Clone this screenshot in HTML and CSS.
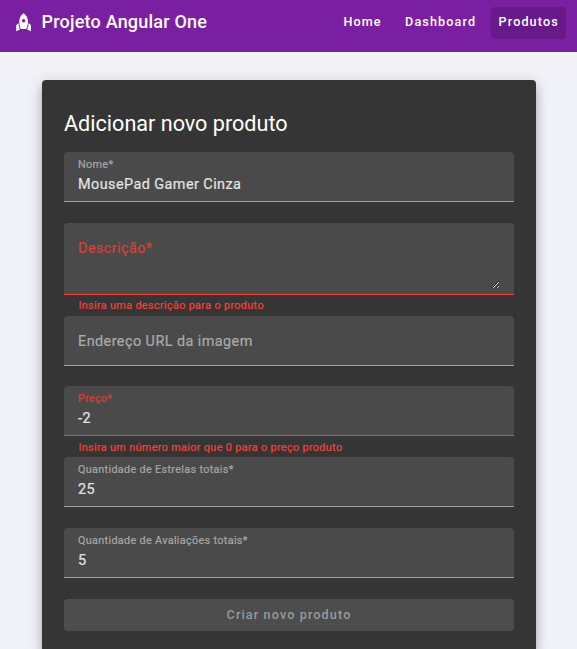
FILE: index.html
```html
<!DOCTYPE html>
<html lang="pt-BR">
<head>
<meta charset="utf-8">
<title>Projeto Angular One</title>
<link rel="stylesheet" href="styles.css">
</head>
<body>
<header class="toolbar">
  <svg class="logo" viewBox="0 0 16 19" width="16" height="19" aria-hidden="true">
    <path fill="#fff" fill-rule="evenodd" d="M7.6 0.2C10.2 2 12 5.1 12 8.7C12 11.4 11.3 13.9 10.3 15.9H4.9C3.9 13.9 3.2 11.4 3.2 8.7C3.2 5.1 5 2 7.6 0.2ZM7.6 6A1.7 1.7 0 1 0 7.6 9.4A1.7 1.7 0 1 0 7.6 6Z"/>
    <path fill="#fff" d="M2.6 10.2C2.7 12.9 3.2 14.8 4.1 16.6L0.2 18.2V13C0.2 11.8 1.3 11 2.6 10.2ZM12.6 10.2C12.5 12.9 12 14.8 11.1 16.6L15 18.2V13C15 11.8 13.9 11 12.6 10.2Z"/>
  </svg>
  <span class="brand">Projeto Angular One</span>
  <nav class="nav">
    <a class="nav-link">Home</a>
    <a class="nav-link">Dashboard</a>
    <a class="nav-link active">Produtos</a>
  </nav>
</header>
<main class="card">
  <h1 class="title">Adicionar novo produto</h1>
  <form class="form">
    <div class="field">
      <div class="box"><span class="label">Nome*</span><span class="value">MousePad Gamer Cinza</span></div>
    </div>
    <div class="field invalid">
      <div class="box area">
        <span class="placeholder">Descrição*</span>
        <svg class="grip" width="8" height="8" viewBox="0 0 8 8" shape-rendering="crispEdges" aria-hidden="true">
          <path stroke="#222" d="M0 6.5h1M1 5.5h1M2 4.5h1M3 3.5h1M4 2.5h1M5 1.5h1M6 .5h1M4 6.5h1M5 5.5h1M6 4.5h1"/>
          <path stroke="#d8d8d8" d="M1 6.5h1M2 5.5h1M3 4.5h1M4 3.5h1M5 2.5h1M6 1.5h1M5 6.5h1M6 5.5h1"/>
        </svg>
      </div>
      <div class="error">Insira uma descrição para o produto</div>
    </div>
    <div class="field">
      <div class="box"><span class="placeholder">Endereço URL da imagem</span></div>
    </div>
    <div class="field invalid">
      <div class="box"><span class="label">Preço*</span><span class="value">-2</span></div>
      <div class="error low">Insira um número maior que 0 para o preço produto</div>
    </div>
    <div class="field">
      <div class="box"><span class="label">Quantidade de Estrelas totais*</span><span class="value">25</span></div>
    </div>
    <div class="field">
      <div class="box"><span class="label">Quantidade de Avaliações totais*</span><span class="value">5</span></div>
    </div>
    <button class="submit" type="button" disabled>Criar novo produto</button>
  </form>
</main>
</body>
</html>
```
FILE: styles.css
```css
* { box-sizing: border-box; }

body {
  margin: 0;
  height: 649px;
  background: #f1f2f8;
  font-family: Roboto, sans-serif;
}

.toolbar {
  display: flex;
  align-items: flex-start;
  height: 52px;
  padding: 7px 11px 0 16px;
  background: #7b1fa2;
  color: #fff;
}

.logo { margin-top: 6px; }

.brand {
  margin-left: 9.5px;
  font-size: 18px;
  font-weight: 500;
  line-height: 29px;
  letter-spacing: .21px;
}

.nav {
  display: flex;
  gap: 9px;
  margin-left: auto;
}

.nav-link {
  height: 32px;
  padding: 0 7.2px;
  border-radius: 4px;
  font-size: 12.6px;
  font-weight: 500;
  line-height: 30px;
  letter-spacing: 1.125px;
}

.nav-link.active {
  margin-left: -1px;
  background: #691a8a;
}

.card {
  width: 494px;
  height: 569px;
  margin: 28px 0 0 42px;
  padding: 29px 22px 0;
  border-radius: 4px 4px 0 0;
  background: #353535;
  box-shadow: 0 5px 5px -3px rgba(0, 0, 0, .2), 0 8px 10px 1px rgba(0, 0, 0, .14), 0 3px 14px 2px rgba(0, 0, 0, .12);
}

.title {
  margin: 0 0 13px;
  color: #fff;
  font-size: 21.6px;
  font-weight: 400;
  line-height: 30px;
}

.field { height: 71px; }
.field:nth-child(3) { height: 70px; }

.box {
  display: flex;
  flex-direction: column;
  height: 50px;
  padding: 6px 14px 0;
  border-bottom: 1px solid #a0a0a0;
  border-radius: 4px 4px 0 0;
  background: #4a4a4a;
}

.area {
  position: relative;
  height: 72px;
}

.field:has(.area) { height: 93px; }

.label, .value, .placeholder, .error { -webkit-text-stroke: .2px currentColor; }

.label {
  color: #a7a7a7;
  font-size: 10.8px;
  line-height: 13px;
  letter-spacing: .34px;
}

.value {
  margin-top: 1px;
  color: #e4e4e4;
  font-size: 14.4px;
  line-height: 26px;
  letter-spacing: .45px;
}

.placeholder {
  margin-top: 7px;
  color: #ababab;
  font-size: 14.4px;
  line-height: 26px;
  letter-spacing: .45px;
}

.invalid .box { border-bottom-color: #f44336; }
.invalid .label, .invalid .placeholder { color: #d74238; }

.grip {
  position: absolute;
  right: 14px;
  bottom: 5px;
}

.error {
  padding: 0 14.4px;
  color: #f44336;
  font-size: 10.8px;
  line-height: 21px;
  letter-spacing: .36px;
}

.error.low { padding-top: 1px; }

.submit {
  display: block;
  width: 100%;
  height: 32px;
  padding: 0;
  border: 0;
  border-radius: 4px;
  background: #4d4d4d;
  color: #9a9a9a;
  font: 500 12.6px/32px Roboto, sans-serif;
  letter-spacing: 1.125px;
}
```
